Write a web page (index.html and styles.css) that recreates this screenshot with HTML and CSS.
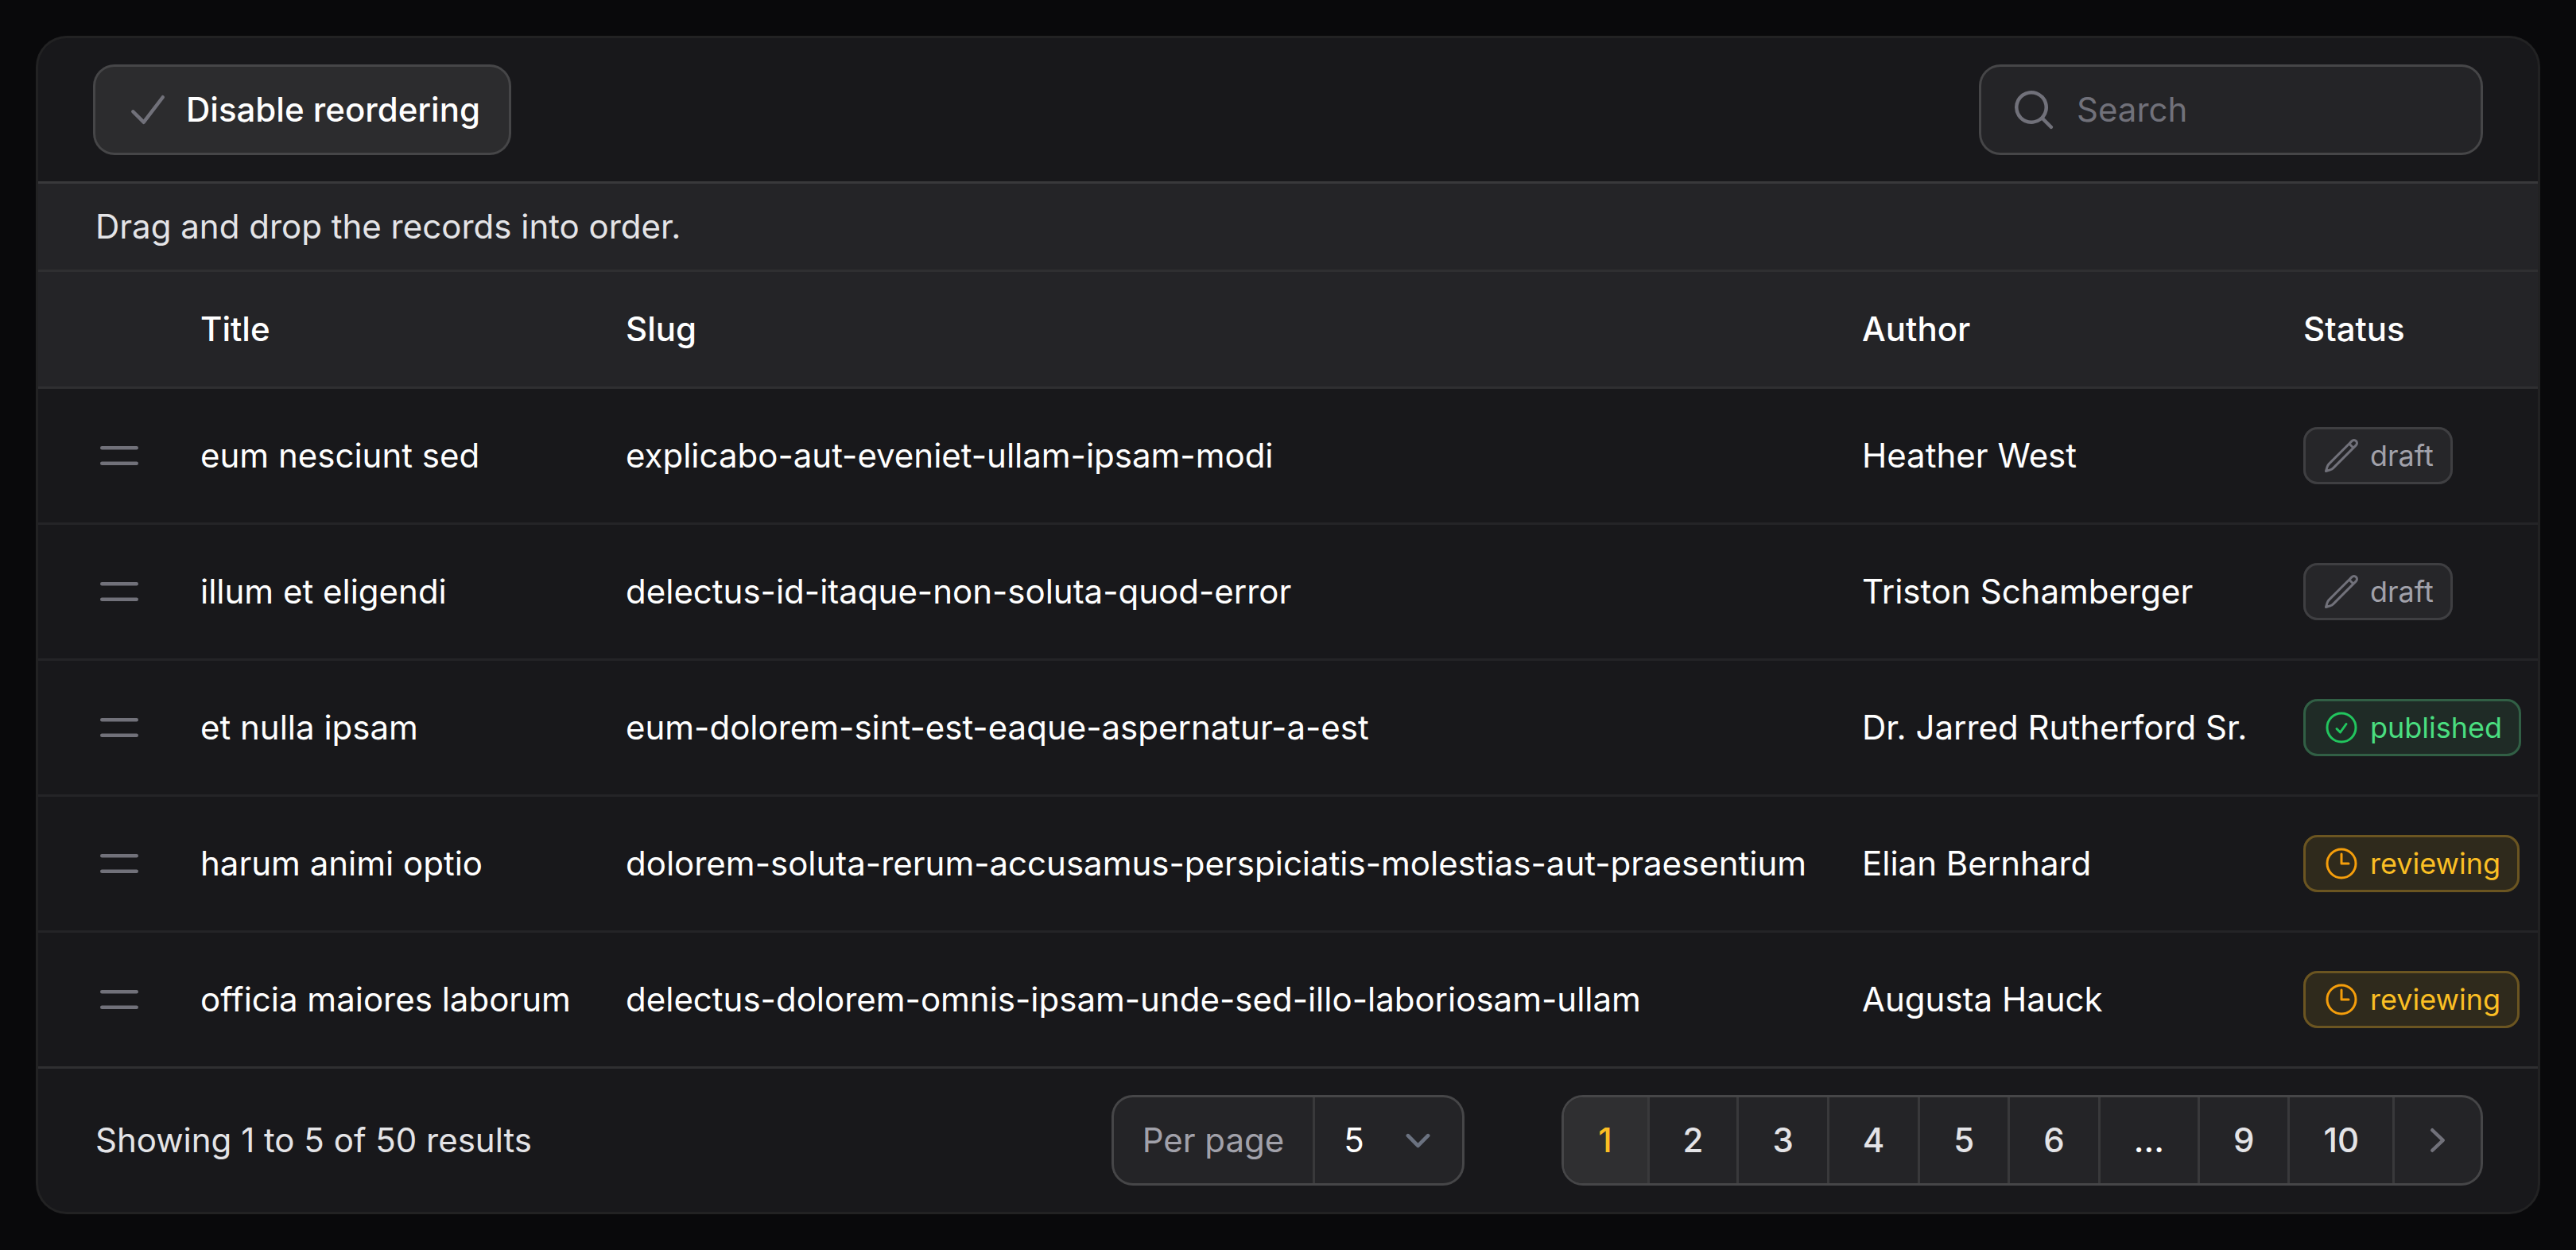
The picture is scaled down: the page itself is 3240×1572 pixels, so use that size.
FILE: index.html
```html
<!DOCTYPE html>
<html lang="en">
<head>
<meta charset="utf-8">
<title>Posts</title>
<link rel="stylesheet" href="styles.css">
</head>
<body>
<svg class="sprite" aria-hidden="true">
  <symbol id="check" viewBox="0 0 20 20"><path fill="currentColor" fill-rule="evenodd" d="M16.704 4.153a.75.75 0 0 1 .143 1.052l-8 10.5a.75.75 0 0 1-1.127.075l-4.5-4.5a.75.75 0 0 1 1.06-1.06l3.894 3.893 7.48-9.817a.75.75 0 0 1 1.05-.143Z"/></symbol>
  <symbol id="search" viewBox="0 0 20 20"><path fill="currentColor" fill-rule="evenodd" d="M9 3.5a5.5 5.5 0 1 0 0 11 5.5 5.5 0 0 0 0-11ZM2 9a7 7 0 1 1 12.452 4.391l3.328 3.329a.75.75 0 1 1-1.06 1.06l-3.329-3.328A7 7 0 0 1 2 9Z"/></symbol>
  <symbol id="bars" viewBox="0 0 20 20"><path fill="currentColor" d="M2 6.75A.75.75 0 0 1 2.75 6h14.5a.75.75 0 0 1 0 1.5H2.75A.75.75 0 0 1 2 6.75Zm0 6.5a.75.75 0 0 1 .75-.75h14.5a.75.75 0 0 1 0 1.5H2.75a.75.75 0 0 1-.75-.75Z"/></symbol>
  <symbol id="pencil" viewBox="0 0 24 24"><path fill="none" stroke="currentColor" stroke-width="1.5" stroke-linecap="round" stroke-linejoin="round" d="m16.862 4.487 1.687-1.688a1.875 1.875 0 1 1 2.652 2.652L6.832 19.82a4.5 4.5 0 0 1-1.897 1.13l-2.685.8.8-2.685a4.5 4.5 0 0 1 1.13-1.897L16.863 4.487Zm0 0L19.5 7.125"/></symbol>
  <symbol id="check-circle" viewBox="0 0 24 24"><path fill="none" stroke="currentColor" stroke-width="1.5" stroke-linecap="round" stroke-linejoin="round" d="M9 12.75 11.25 15 15 9.75M21 12a9 9 0 1 1-18 0 9 9 0 0 1 18 0Z"/></symbol>
  <symbol id="clock" viewBox="0 0 24 24"><path fill="none" stroke="currentColor" stroke-width="1.5" stroke-linecap="round" stroke-linejoin="round" d="M12 6v6h4.5m4.5 0a9 9 0 1 1-18 0 9 9 0 0 1 18 0Z"/></symbol>
  <symbol id="chevron-down" viewBox="0 0 20 20"><path fill="none" stroke="currentColor" stroke-width="1.5" stroke-linecap="round" stroke-linejoin="round" d="m6 8 4 4 4-4"/></symbol>
  <symbol id="chevron-right" viewBox="0 0 20 20"><path fill="currentColor" fill-rule="evenodd" d="M7.21 14.77a.75.75 0 0 1 .02-1.06L11.168 10 7.23 6.29a.75.75 0 1 1 1.04-1.08l4.5 4.25a.75.75 0 0 1 0 1.08l-4.5 4.25a.75.75 0 0 1-1.06-.02Z"/></symbol>
</svg>

<main class="card">
  <div class="toolbar">
    <button type="button" class="btn"><svg class="icon"><use href="#check"/></svg>Disable reordering</button>
    <label class="search">
      <svg class="icon" aria-hidden="true"><use href="#search"/></svg>
      <input type="search" placeholder="Search" aria-label="Search">
    </label>
  </div>

  <p class="banner">Drag and drop the records into order.</p>

  <div class="table-wrap">
    <table class="table">
      <colgroup>
        <col class="col-handle"><col class="col-title"><col class="col-slug"><col class="col-author"><col>
      </colgroup>
      <thead>
        <tr><th class="handle-cell"></th><th>Title</th><th>Slug</th><th>Author</th><th>Status</th></tr>
      </thead>
      <tbody>
        <tr>
          <td class="handle-cell"><button type="button" class="handle" aria-label="Reorder"><svg class="icon"><use href="#bars"/></svg></button></td>
          <td>eum nesciunt sed</td><td>explicabo-aut-eveniet-ullam-ipsam-modi</td><td>Heather West</td>
          <td><span class="badge badge-gray"><svg class="badge-icon"><use href="#pencil"/></svg>draft</span></td>
        </tr>
        <tr>
          <td class="handle-cell"><button type="button" class="handle" aria-label="Reorder"><svg class="icon"><use href="#bars"/></svg></button></td>
          <td>illum et eligendi</td><td>delectus-id-itaque-non-soluta-quod-error</td><td>Triston Schamberger</td>
          <td><span class="badge badge-gray"><svg class="badge-icon"><use href="#pencil"/></svg>draft</span></td>
        </tr>
        <tr>
          <td class="handle-cell"><button type="button" class="handle" aria-label="Reorder"><svg class="icon"><use href="#bars"/></svg></button></td>
          <td>et nulla ipsam</td><td>eum-dolorem-sint-est-eaque-aspernatur-a-est</td><td>Dr. Jarred Rutherford Sr.</td>
          <td><span class="badge badge-green"><svg class="badge-icon"><use href="#check-circle"/></svg>published</span></td>
        </tr>
        <tr>
          <td class="handle-cell"><button type="button" class="handle" aria-label="Reorder"><svg class="icon"><use href="#bars"/></svg></button></td>
          <td>harum animi optio</td><td>dolorem-soluta-rerum-accusamus-perspiciatis-molestias-aut-praesentium</td><td>Elian Bernhard</td>
          <td><span class="badge badge-amber"><svg class="badge-icon"><use href="#clock"/></svg>reviewing</span></td>
        </tr>
        <tr>
          <td class="handle-cell"><button type="button" class="handle" aria-label="Reorder"><svg class="icon"><use href="#bars"/></svg></button></td>
          <td>officia maiores laborum</td><td>delectus-dolorem-omnis-ipsam-unde-sed-illo-laboriosam-ullam</td><td>Augusta Hauck</td>
          <td><span class="badge badge-amber"><svg class="badge-icon"><use href="#clock"/></svg>reviewing</span></td>
        </tr>
      </tbody>
    </table>
  </div>

  <div class="footer">
    <span class="summary">Showing 1 to 5 of 50 results</span>
    <div class="per-page">
      <label for="per-page">Per page</label>
      <div class="select-wrap">
        <select id="per-page"><option selected>5</option><option>10</option><option>25</option><option>50</option><option>All</option></select>
        <svg class="select-arrow" aria-hidden="true"><use href="#chevron-down"/></svg>
      </div>
    </div>
    <nav class="pages" aria-label="Pagination">
      <button type="button" class="current" aria-current="page"><span>1</span></button>
      <button type="button"><span>2</span></button>
      <button type="button"><span>3</span></button>
      <button type="button"><span>4</span></button>
      <button type="button"><span>5</span></button>
      <button type="button"><span>6</span></button>
      <button type="button" class="dots" disabled><span>...</span></button>
      <button type="button"><span>9</span></button>
      <button type="button"><span>10</span></button>
      <button type="button" aria-label="Next"><svg class="icon"><use href="#chevron-right"/></svg></button>
    </nav>
  </div>
</main>
</body>
</html>
```
FILE: styles.css
```css
* {
  box-sizing: border-box;
}

body {
  margin: 0;
  padding: 48px;
  background: #09090b;
  color: #fff;
  font: 400 42px/60px Inter, "Liberation Sans", sans-serif;
}

button,
input,
select {
  margin: 0;
  padding: 0;
  border: 0;
  background: none;
  color: inherit;
  font: inherit;
}

.sprite {
  display: none;
}

.icon {
  display: block;
  flex: none;
  width: 60px;
  height: 60px;
  color: #71717a;
}

.card {
  overflow: hidden;
  border-radius: 36px;
  background: #18181b;
  box-shadow: 0 0 0 3px rgba(255, 255, 255, 0.1);
}

.toolbar {
  display: flex;
  align-items: center;
  justify-content: space-between;
  padding: 36px 72px;
}

.btn {
  display: flex;
  align-items: center;
  gap: 18px;
  padding: 24px 36px;
  border-radius: 24px;
  background: #2c2c2e;
  box-shadow: 0 0 0 3px #464648;
  font-weight: 500;
}

.search {
  display: flex;
  align-items: center;
  gap: 24px;
  width: 628px;
  padding: 24px 36px;
  border-radius: 24px;
  background: #242427;
  box-shadow: 0 0 0 3px #464648;
}

.search input {
  flex: 1;
  min-width: 0;
  height: 60px;
  outline: 0;
  appearance: none;
}

.search input::placeholder {
  color: #71717a;
  opacity: 1;
}

.banner {
  margin: 0;
  padding: 24px 72px;
  border-top: 3px solid #39393b;
  background: #242427;
  color: #e4e4e7;
}

.table-wrap {
  overflow: hidden;
}

.table {
  width: 100%;
  table-layout: fixed;
  border-spacing: 0;
  text-align: left;
  white-space: nowrap;
}

.col-handle {
  width: 168px;
}

.col-title {
  width: 535px;
}

.col-slug {
  width: 1555px;
}

.col-author {
  width: 555px;
}

.table th {
  padding: 42px 36px;
  border-top: 3px solid #2f2f31;
  border-bottom: 3px solid #2f2f31;
  background: #242427;
  font-weight: 500;
}

.table td {
  height: 171px;
  padding: 0 36px;
  border-bottom: 3px solid #242427;
}

.table tbody tr:last-child td {
  height: 168px;
  border-bottom: 0;
}

.table .handle-cell {
  padding-left: 72px;
}

.handle {
  display: block;
}

.badge {
  display: flex;
  align-items: center;
  gap: 12px;
  width: max-content;
  padding: 12px 24px;
  border-radius: 18px;
  font-size: 36px;
  line-height: 48px;
}

.badge-icon {
  width: 48px;
  height: 48px;
}

.badge-gray {
  background: #262629;
  box-shadow: inset 0 0 0 3px #3f3f42;
  color: #a1a1aa;
}

.badge-gray .badge-icon {
  color: #71717a;
}

.badge-green {
  background: #1f2b26;
  box-shadow: inset 0 0 0 3px #315f45;
  color: #4ade80;
}

.badge-green .badge-icon {
  color: #22c55e;
}

.badge-amber {
  background: #2f2a1c;
  box-shadow: inset 0 0 0 3px #6b5521;
  color: #fbbf24;
}

.badge-amber .badge-icon {
  color: #f59e0b;
}

.footer {
  display: grid;
  grid-template-columns: 1fr auto 1fr;
  align-items: center;
  padding: 36px 72px;
  border-top: 3px solid #2f2f31;
}

.summary {
  color: #e4e4e7;
}

.per-page,
.pages {
  display: flex;
  overflow: hidden;
  height: 108px;
  border-radius: 24px;
  background: #242427;
  box-shadow: 0 0 0 3px #464648;
}

.per-page label {
  padding: 24px 36px;
  border-right: 3px solid #39393b;
  color: #a1a1aa;
}

.select-wrap {
  display: grid;
  align-items: center;
}

.select-wrap select,
.select-arrow {
  grid-area: 1 / 1;
}

.select-wrap select {
  height: 108px;
  padding: 0 96px 0 36px;
  appearance: none;
}

.select-arrow {
  justify-self: end;
  width: 63px;
  height: 63px;
  margin-right: 24px;
  color: #6b7280;
  pointer-events: none;
}

.pages {
  justify-self: end;
}

.pages button {
  min-width: 105px;
  padding: 24px;
  color: #e4e4e7;
  font-weight: 500;
}

.pages button + button {
  border-left: 3px solid #39393b;
}

.pages span {
  padding: 0 18px;
}

.pages .current {
  background: #2f2f31;
  color: #fbbf24;
}

.pages .dots {
  color: #fff;
}
```
